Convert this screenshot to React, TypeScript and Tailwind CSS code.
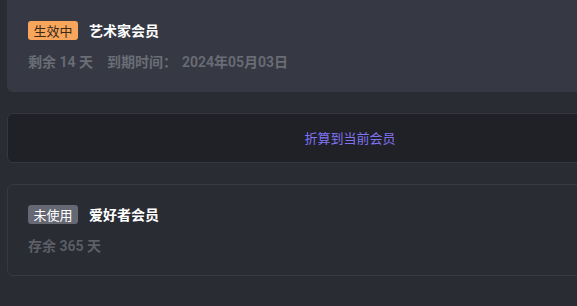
import React from "react";

const font = {
  fontFamily: '"Noto Sans CJK SC", "Noto Sans", sans-serif',
};

export default function App() {
  return (
    <div
      className="w-[577px] h-[306px] overflow-hidden bg-[#2a2c34]"
      style={font}
    >
      <div className="w-[686px] ml-[7px] flex flex-col">
        {/* active membership */}
        <div className="bg-[#363943] rounded-b-md px-[21px] pt-[21px] pb-[20px] h-[92px]">
          <div className="flex items-center gap-[11px] h-[19px]">
            <span className="h-[19px] w-[50px] rounded-[3px] bg-[#f8a65c] text-[#3a2a1c] text-[13px] leading-[19px] text-center">
              生效中
            </span>
            <span className="text-white text-[14px] font-bold">艺术家会员</span>
          </div>
          <div
            className="mt-[12px] text-[14px] font-semibold text-[#6a6d76] leading-[20px]"
            style={{ fontFamily: 'Roboto, "Noto Sans CJK SC", sans-serif' }}
          >
            剩余 14 天<span className="ml-[14px]">到期时间：</span>
            <span className="ml-[5px]">2024年05月03日</span>
          </div>
        </div>

        {/* convert button */}
        <button className="mt-[21px] h-[50px] w-full rounded-md bg-[#202126] border border-[#36383f] text-[#7f73f2] text-[13px]">
          折算到当前会员
        </button>

        {/* unused membership */}
        <div className="mt-[21px] h-[92px] rounded-md border border-[#363942] px-[20px] pt-[20px]">
          <div className="flex items-center gap-[11px] h-[19px]">
            <span className="h-[19px] w-[50px] rounded-[3px] bg-[#666874] text-white text-[13px] leading-[19px] text-center">
              未使用
            </span>
            <span className="text-white text-[14px] font-bold">爱好者会员</span>
          </div>
          <div
            className="mt-[12px] text-[14px] font-semibold text-[#5c5f68] leading-[20px]"
            style={{ fontFamily: 'Roboto, "Noto Sans CJK SC", sans-serif' }}
          >
            存余 365 天
          </div>
        </div>
      </div>
    </div>
  );
}
